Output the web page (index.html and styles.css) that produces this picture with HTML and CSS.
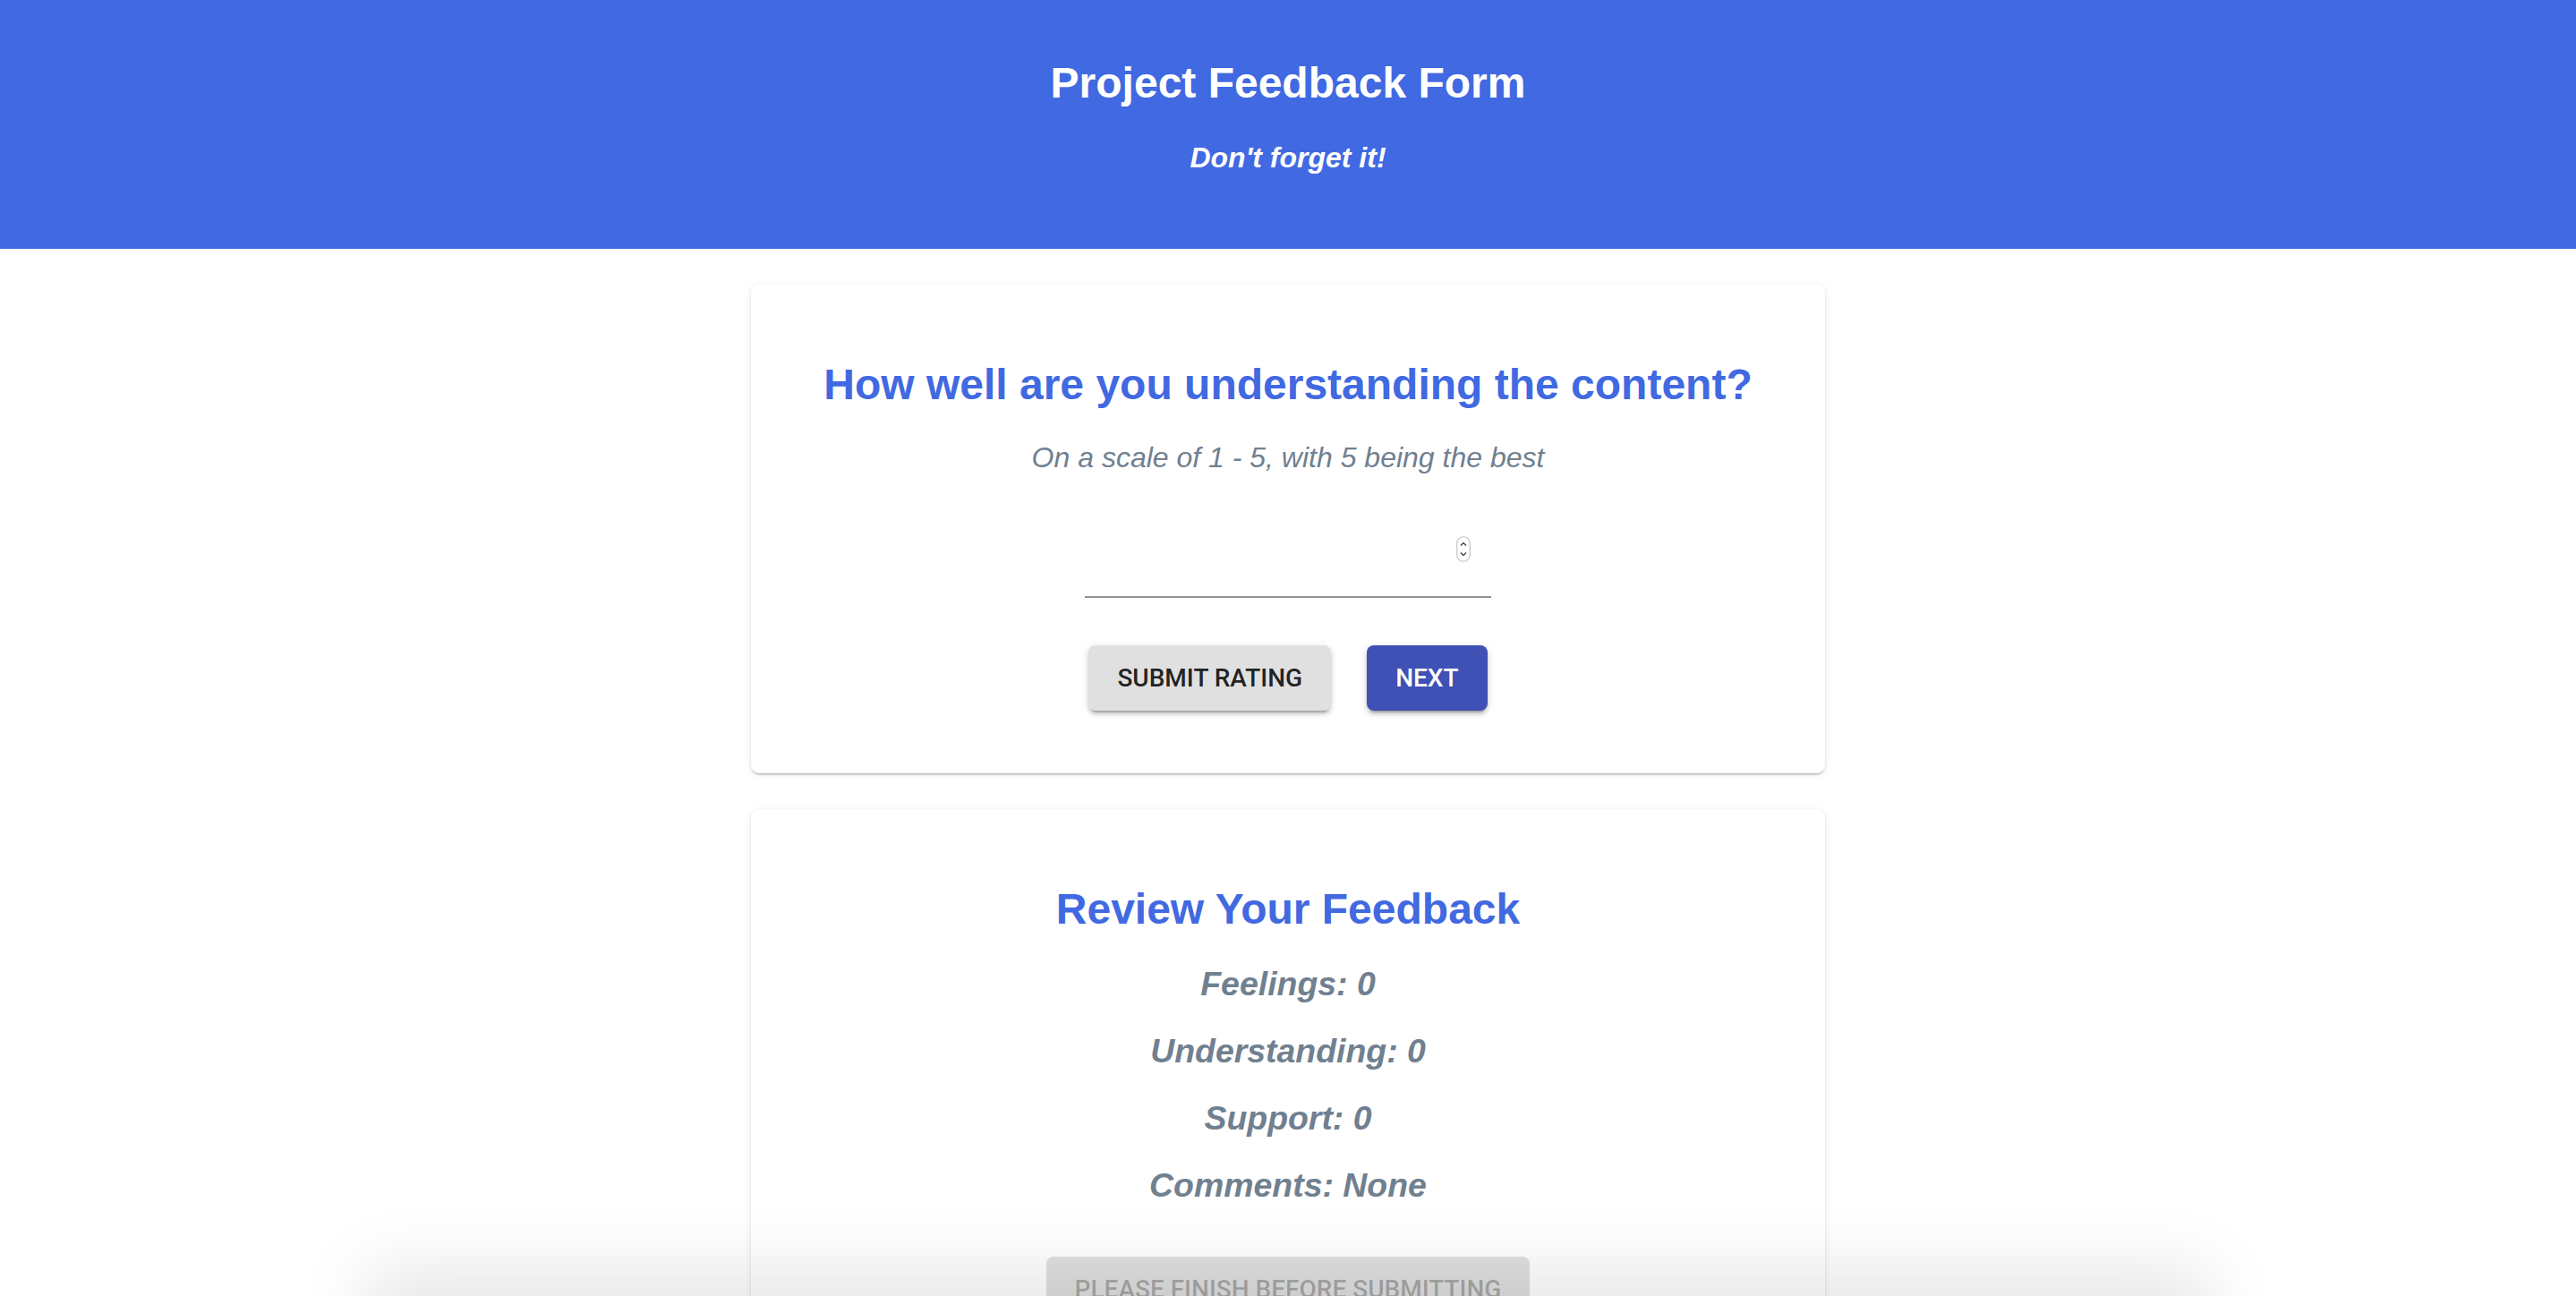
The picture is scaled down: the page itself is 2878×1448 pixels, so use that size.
FILE: index.html
```html
<!DOCTYPE html>
<html lang="en">
<head>
<meta charset="utf-8">
<title>Project Feedback Form</title>
<link rel="stylesheet" href="styles.css">
</head>
<body>
<header class="site-header">
  <h1 class="site-title">Project Feedback Form</h1>
  <p class="site-tagline">Don't forget it!</p>
</header>
<main class="content">
  <section class="card">
    <h2 class="card-heading">How well are you understanding the content?</h2>
    <p class="card-sub">On a scale of 1 - 5, with 5 being the best</p>
    <div class="field">
      <input class="field-input" type="text" aria-label="rating">
      <svg class="spinner" width="16" height="29" viewBox="0 0 16 29" aria-hidden="true">
        <rect x="0.75" y="0.75" width="14.5" height="27.5" rx="7.25" fill="#fff" stroke="#c4c4c4" stroke-width="1.2"/>
        <path d="M5 10.5 L8 7.5 L11 10.5" fill="none" stroke="#333" stroke-width="1.2"/>
        <path d="M5 18.5 L8 21.5 L11 18.5" fill="none" stroke="#333" stroke-width="1.2"/>
      </svg>
    </div>
    <div class="actions">
      <button class="btn btn-default" type="button">Submit Rating</button>
      <button class="btn btn-primary" type="button">Next</button>
    </div>
  </section>
  <section class="card">
    <h2 class="card-heading">Review Your Feedback</h2>
    <h3 class="review-item">Feelings: 0</h3>
    <h3 class="review-item">Understanding: 0</h3>
    <h3 class="review-item">Support: 0</h3>
    <h3 class="review-item">Comments: None</h3>
    <div class="actions actions-review">
      <button class="btn btn-disabled" type="button" disabled>Please Finish Before Submitting</button>
    </div>
  </section>
</main>
<div class="bottom-fade" aria-hidden="true"></div>
</body>
</html>
```
FILE: styles.css
```css
html, body {
  margin: 0;
  padding: 0;
  background: #ffffff;
}

body {
  font-family: "Liberation Sans", Arial, sans-serif;
}

.site-header {
  background: #4169e1;
  color: #ffffff;
  text-align: center;
  padding: 65px 0 83px;
}

.site-title {
  margin: 0 0 38px;
  font-size: 48px;
  font-weight: 700;
  line-height: normal;
}

.site-tagline {
  margin: 0;
  font-size: 32px;
  font-weight: 700;
  font-style: italic;
  line-height: normal;
}

.content {
  display: flex;
  flex-direction: column;
  align-items: center;
  gap: 40px;
  padding: 40px 0 80px;
}

.card {
  width: 1200px;
  box-sizing: border-box;
  background: #ffffff;
  border-radius: 9px;
  box-shadow: 0 3px 2px -2px rgba(0, 0, 0, 0.16), 0 2px 2px 0 rgba(0, 0, 0, 0.1), 0 1px 6px 0 rgba(0, 0, 0, 0.1);
  padding: 84px 40px 70px;
  display: flex;
  flex-direction: column;
  align-items: center;
  text-align: center;
}

.card-heading {
  margin: 0;
  font-size: 48px;
  font-weight: 700;
  line-height: normal;
  color: #4169e1;
}

.card-sub {
  margin: 36px 0 0;
  font-size: 32px;
  font-style: italic;
  line-height: normal;
  color: #708090;
}

.field {
  margin-top: 44px;
  width: 454px;
  box-sizing: border-box;
  display: flex;
  align-items: flex-start;
  padding: 25px 23px 38px 0;
  border-bottom: 2px solid #949494;
}

.field-input {
  flex: 1;
  min-width: 0;
  border: 0;
  outline: none;
  background: transparent;
  font-family: "Liberation Sans", Arial, sans-serif;
  font-size: 32px;
  padding: 0;
  height: 28px;
}

.spinner {
  display: block;
  flex: none;
}

.actions {
  margin-top: 53px;
  display: flex;
  gap: 40px;
  justify-content: center;
}

.actions-review {
  margin-top: 58px;
}

.btn {
  font-family: Roboto, "Liberation Sans", sans-serif;
  font-weight: 500;
  font-size: 28px;
  line-height: 49px;
  letter-spacing: 0;
  text-transform: uppercase;
  height: 73px;
  min-width: 128px;
  padding: 12px 32px;
  box-sizing: border-box;
  border: 0;
  border-radius: 8px;
  cursor: pointer;
}

.btn-default {
  background: #e0e0e0;
  color: rgba(0, 0, 0, 0.87);
  box-shadow: 0 6px 2px -4px rgba(0, 0, 0, 0.2), 0 4px 4px 0 rgba(0, 0, 0, 0.14), 0 2px 10px 0 rgba(0, 0, 0, 0.12);
}

.btn-primary {
  background: #3f51b5;
  color: #ffffff;
  box-shadow: 0 6px 2px -4px rgba(0, 0, 0, 0.2), 0 4px 4px 0 rgba(0, 0, 0, 0.14), 0 2px 10px 0 rgba(0, 0, 0, 0.12);
}

.btn-disabled {
  background: #e0e0e0;
  color: rgba(0, 0, 0, 0.26);
  cursor: default;
}

.review-item {
  margin: 32px 0 0;
  font-size: 37.44px;
  font-weight: 700;
  font-style: italic;
  line-height: normal;
  color: #708090;
}

.card-heading + .review-item {
  margin-top: 35px;
}

.bottom-fade {
  position: fixed;
  left: 440px;
  right: 440px;
  bottom: -70px;
  height: 70px;
  box-shadow: 0 0 80px 30px rgba(0, 0, 0, 0.1);
  pointer-events: none;
}
```
